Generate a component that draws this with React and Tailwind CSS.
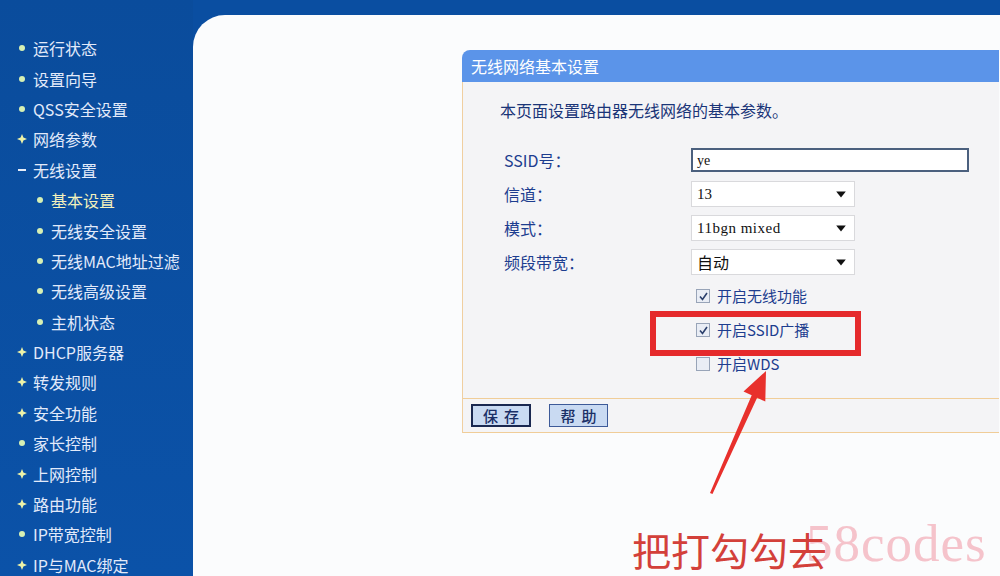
import React from 'react';

const menu = [
  { t: '运行状态', b: 'dot' },
  { t: '设置向导', b: 'dot' },
  { t: 'QSS安全设置', b: 'dot' },
  { t: '网络参数', b: 'plus' },
  { t: '无线设置', b: 'dash' },
  { t: '基本设置', b: 'dot', sub: true, active: true },
  { t: '无线安全设置', b: 'dot', sub: true },
  { t: '无线MAC地址过滤', b: 'dot', sub: true },
  { t: '无线高级设置', b: 'dot', sub: true },
  { t: '主机状态', b: 'dot', sub: true },
  { t: 'DHCP服务器', b: 'plus' },
  { t: '转发规则', b: 'plus' },
  { t: '安全功能', b: 'plus' },
  { t: '家长控制', b: 'dot' },
  { t: '上网控制', b: 'plus' },
  { t: '路由功能', b: 'plus' },
  { t: 'IP带宽控制', b: 'dot' },
  { t: 'IP与MAC绑定', b: 'plus' },
];

const Bullet = ({ type }) => {
  if (type === 'dot') return <span className="w-[6px] h-[6px] rounded-full bg-[#d6f0b4]" />;
  if (type === 'dash') return <span className="w-[8px] h-[2px] bg-[#e8eef8]" />;
  return (
    <svg width="10" height="10" viewBox="0 0 10 10">
      <polygon points="5,0 6.4,3.6 10,5 6.4,6.4 5,10 3.6,6.4 0,5 3.6,3.6" fill="#eef3a8" />
    </svg>
  );
};

const Arrow = () => (
  <svg className="w-3 h-3" viewBox="0 0 10 10">
    <polygon points="1,3 9,3 5,8" fill="#111" />
  </svg>
);

const Check = ({ on }) => (
  <span className="w-[14px] h-[14px] border border-[#98a4b8] bg-[#e9edf5] flex items-center justify-center">
    {on && (
      <svg width="11" height="11" viewBox="0 0 11 11">
        <path d="M2 5.5 L4.5 8.5 L9 2" stroke="#2b3f6c" strokeWidth="1.6" fill="none" />
      </svg>
    )}
  </span>
);

const Select = ({ children }) => (
  <div className="w-[164px] h-[26px] bg-white border border-[#d9d9dc] flex items-center justify-between pl-[5px] pr-[7px] text-[#111]">
    {children}
    <Arrow />
  </div>
);

export default function App() {
  const cjk = "font-['Noto_Sans_CJK_SC','Liberation_Sans',sans-serif]";
  return (
    <div className={`relative w-[1000px] h-[576px] overflow-hidden bg-[#0a4ea1] flex ${cjk}`}>
      {/* sidebar */}
      <div className="w-[193px] shrink-0 pt-[33px] bg-gradient-to-b from-[#0a4c9c] to-[#0b52a8]">
        {menu.map((m) => (
          <div
            key={m.t}
            className={`h-[30.4px] flex items-center gap-[6px] text-[16px] leading-none ${m.sub ? 'pl-[35px]' : 'pl-[17px]'} ${m.active ? 'text-[#f3f1bc]' : 'text-[#e2eafa]'}`}
          >
            <span className="w-[10px] flex justify-center items-center">
              <Bullet type={m.b} />
            </span>
            <span>{m.t}</span>
          </div>
        ))}
      </div>

      {/* content */}
      <div className="flex-1 mt-[15px] bg-[#fbfcfd] rounded-tl-[32px] pl-[269px] pt-[35px]">
        <div className="w-[537px]">
          <div className="h-[32px] bg-[#5b94e9] rounded-tl-[8px] flex items-center pl-[9px] text-white text-[16px]">
            无线网络基本设置
          </div>
          <div className="bg-[#f4f4f6] border-l border-[#f0cfa0]">
            <div className="pl-[37px] pt-[18px] h-[61px] text-[16px] leading-[20px] text-[#1a3578]">
              本页面设置路由器无线网络的基本参数。
            </div>
            <div className="pb-[17px] text-[#1d3d8f] text-[16px]">
              <div className="h-[34px] flex items-center">
                <span className="w-[228px] pl-[41px]">SSID号：</span>
                <div className="w-[278px] h-[24px] border-2 border-[#4b607e] bg-white flex items-center pl-[4px] text-[14px] text-[#111] font-['Liberation_Serif',serif]">
                  ye
                </div>
              </div>
              <div className="h-[34px] flex items-center">
                <span className="w-[228px] pl-[41px]">信道：</span>
                <Select><span className="text-[15px] font-['Liberation_Serif',serif]">13</span></Select>
              </div>
              <div className="h-[34px] flex items-center">
                <span className="w-[228px] pl-[41px]">模式：</span>
                <Select><span className="text-[15px] font-['Liberation_Serif',serif] tracking-[0.5px]">11bgn mixed</span></Select>
              </div>
              <div className="h-[34px] flex items-center">
                <span className="w-[228px] pl-[41px]">频段带宽：</span>
                <Select><span className="text-[16px]">自动</span></Select>
              </div>
              {[
                ['开启无线功能', true],
                ['开启SSID广播', true],
                ['开启WDS', false],
              ].map(([t, on]) => (
                <div key={t} className="h-[34px] flex items-center pl-[233px] gap-[7px] text-[15px]">
                  <Check on={on} />
                  <span>{t}</span>
                </div>
              ))}
            </div>
            <div className="h-[35px] border-t border-b border-[#f0cd98] flex items-center pl-[8px] gap-[18px]">
              <button className="w-[60px] h-[23px] border-2 border-[#1a2850] bg-[#c9daf2] text-[15px] font-medium text-[#1a2f66] tracking-[6px] pl-[6px] leading-none">
                保存
              </button>
              <button className="w-[59px] h-[23px] border border-[#3d5a98] bg-[#c9daf2] text-[15px] font-medium text-[#1a2f66] tracking-[6px] pl-[6px] leading-none">
                帮助
              </button>
            </div>
          </div>
        </div>
      </div>

      {/* annotations */}
      <div className="absolute left-[650px] top-[311px] w-[211px] h-[45px] border-[6px] border-[#e52a2c]" />
      <svg className="absolute left-0 top-0" width="1000" height="576" viewBox="0 0 1000 576">
        <polygon
          points="710,493 751.7,395.3 743.5,391.5 766,371 765.3,401.5 757.1,397.7 712.5,494"
          fill="#e8302c"
        />
      </svg>
      <div className="absolute left-[806px] top-[517px] text-[53px] leading-none text-[#f5c3cb] font-['Liberation_Serif',serif] tracking-[1px]">
        58codes
      </div>
      <div className="absolute left-[632px] top-[530px] text-[39px] leading-none text-[#d3403a]">
        把打勾勾去
      </div>
    </div>
  );
}
